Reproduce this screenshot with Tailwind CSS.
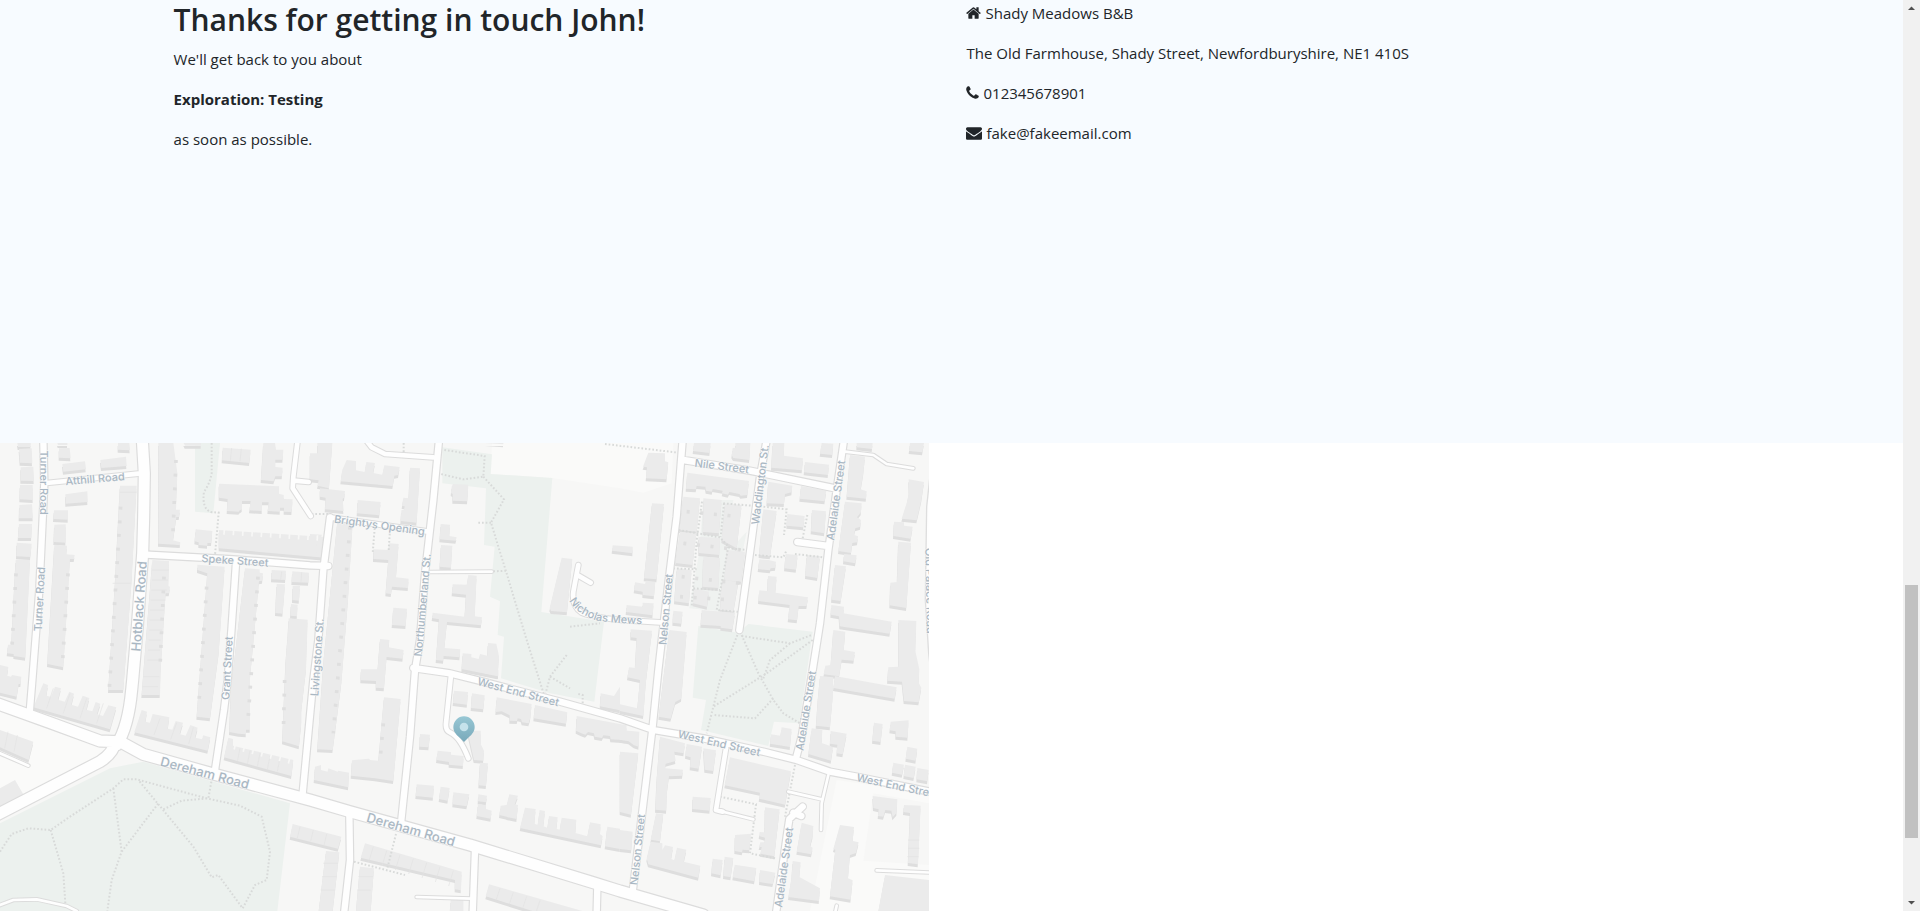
<!DOCTYPE html>
<html lang="en">
<head>
<meta charset="utf-8">
<meta name="viewport" content="width=device-width, initial-scale=1">
<title>Shady Meadows B&amp;B</title>
<script src="https://cdn.jsdelivr.net/npm/@tailwindcss/browser@4"></script>
</head>
<body class="flex h-screen overflow-hidden bg-white font-['Open_Sans','Noto_Sans',sans-serif] text-[#212529]">
<main class="flex min-w-0 flex-1 flex-col">
  <section class="h-[443px] shrink-0 bg-[#f7fbff]">
    <div class="mx-auto grid w-10/12 grid-cols-2 pt-px text-[15px] leading-6">
      <div class="px-[15px]">
        <h2 class="mb-2 text-[30px] leading-[38px] font-semibold">Thanks for getting in touch John!</h2>
        <p class="mb-4">We'll get back to you about</p>
        <p class="mb-4 font-bold">Exploration: Testing</p>
        <p>as soon as possible.</p>
      </div>
      <address class="px-[15px] not-italic">
        <p class="mb-4 flex items-center gap-1"><svg class="h-4 w-[15px]" viewBox="64 0 1664 1792" fill="currentColor" aria-hidden="true"><path d="M1472 992v480q0 26-19 45t-45 19h-384v-384h-256v384h-384q-26 0-45-19t-19-45v-480q0-1 .5-3t.5-3l575-474 575 474q1 2 1 6zm223-69l-62 74q-8 9-21 11h-3q-13 0-21-7l-692-577-692 577q-12 8-24 7-13-2-21-11l-62-74q-8-10-7-23.5t11-21.5l719-599q32-26 76-26t76 26l244 204v-195q0-14 9-23t23-9h192q14 0 23 9t9 23v408l219 182q10 8 11 21.5t-7 23.5z"/></svg>Shady Meadows B&amp;B</p>
        <p class="mb-4">The Old Farmhouse, Shady Street, Newfordburyshire, NE1 410S</p>
        <p class="mb-4 flex items-center gap-1"><svg class="h-4 w-[13px]" viewBox="192 0 1408 1792" fill="currentColor" aria-hidden="true"><path d="M1600 1240q0 27-10 70.5t-21 68.5q-21 50-122 106-94 51-186 51-27 0-53-3.5t-57.5-12.5-47-14.5-55.5-20.5-49-18q-98-35-175-83-127-79-264-216t-216-264q-48-77-83-175-3-9-18-49t-20.5-55.5-14.5-47-12.5-57.5-3.5-53q0-92 51-186 56-101 106-122 25-11 68.5-21t70.5-10q14 0 21 3 18 6 53 76 11 19 30 54t35 63.5 31 53.5q3 4 17.5 25t21.5 35.5 7 28.5q0 20-28.5 50t-62 55-62 53-28.5 46q0 9 5 22.5t8.5 20.5 14 24 11.5 19q76 137 174 235t235 174q2 1 19 11.5t24 14 20.5 8.5 22.5 5q18 0 46-28.5t53-62 55-62 50-28.5q14 0 28.5 7t35.5 21.5 25 17.5q25 15 53.5 31t63.5 35 54 30q70 35 76 53 3 7 3 21z"/></svg>012345678901</p>
        <p class="flex items-center gap-1"><svg class="h-4 w-4" viewBox="0 0 1792 1792" fill="currentColor" aria-hidden="true"><path d="M1792 710v794q0 66-47 113t-113 47h-1472q-66 0-113-47t-47-113v-794q44 49 101 87 362 246 497 345 57 42 92.5 65.5t94.5 48 110 24.5h2q51 0 110-24.5t94.5-48 92.5-65.5q170-123 498-345 57-39 100-87zm0-294q0 79-49 151t-122 123q-376 261-468 325-10 7-42.5 31t-54 38.5-52 32.5-57.5 27-50 9h-2q-23 0-50-9t-57.5-27-52-32.5-54-38.5-42.5-31q-91-64-262-182.5t-205-142.5q-62-42-117-115.5t-55-136.5q0-78 41.5-130t118.5-52h1472q65 0 112.5 47t47.5 113z"/></svg>fake@fakeemail.com</p>
      </address>
    </div>
  </section>
  <section class="min-h-0 flex-1 overflow-hidden" aria-label="Map">
    <svg class="block h-[468px] w-[929px]" viewBox="0 9 2787 1404" role="img" aria-label="Street map around Shady Meadows B&amp;B">
      <defs>
        <g id="buildings">
          <path d="M52 9h40v12h-38zM57 27l38-2 2 45-37-2zM62 82l38-2 2 43-40-1zM60 135h38l1 45-40-2zM58 195l38-2 3 42h-42zM57 252h39l-2 42h-40zM50 308l45 3-4 40-42-2zM47 360h43l-14 293-35-5v-6l-20-2 3-26h10zM172 9h30v6h-28zM177 25l32-1 3 31-35-2zM187 72l68-8 3 24-68 7zM301 60l77-10 2 28-76 6zM354 9h34l2 22-36-2zM196 163l66-9 1 32-66 5zM162 211h42v28l-44-2zM163 254l34-1v55l-36-2zM163 314l38 3-2 26 25 2-2 12h-12l-20 325-48-10zM360 137h50l-15 283-25 330h-45l20-320zM475 9h45l12 90-4 110h12l-3 22h-8l-10 70 22 6-1 8-65-4zM457 360l50 3-2 75 5 2-3 20h-10l-15 230-2 75h-55zM551 9h52v8h-48zM668 23l84 6-4 40-82-8zM790 9h35l3 20h22l-2 30h-22v22l22 2-2 26h-20l-5 15-38-4zM657 131l180 8v22l14 4v12l27 1-3 38-23-1v-12h-12v12l-37-2 3-26h-20v26l-38-2 4-28h-26v24l-9 6v2l-36-2 2-36-26-4zM587 268l50 5-3 36h-12v8l-26-2v-8l-12-3zM657 270l330 22-4 62-326-29zM592 374l82 6-18 260-26 195-40-5 18-240 14-190-30-10zM735 385l44 3v10l10 2-2 22-10 2-12 130-15 160v155h-12v14l-22-2-28-5 5-130zM815 390l43 2-2 28-42-2zM877 394l50 4-2 30-50-2zM830 432l25 1-7 88-22-2zM878 438h22l-3 44-20-2zM873 492l20 2-2 35-20-2zM866 535l57 4-5 150-14 120v40l-7 70-50-15 4-100 6-140 7-90zM0 675l25 6-4 26 12 3 3-5 28 5-2 22h-6l-6 38-50-12z"/>
          <path transform="translate(0 690)" d="M130 40l14 5-5 32 14 3 12-30 18 5-9 34 20 6 14-30 14 6-8 33 20 6 14-33 20 7-9 35 18 5 10-28 14 5-10 32 18 5 16-32 24 6-19 66-230-66zM425 120l16 5-5 30 14 3 8-26 50 10-5 34 14 3 10-26 22 5-10 34 18 5 14-32 22 8-8 30 22 5 2-12 22 6-8 40-220-55zM685 203l14 4v20l181 43-6 48-202-56zM0 180l100 35-14 55-86-38zM0 355l45-25 28 48-73 35z"/>
          <path transform="translate(930 0)" d="M0 40h22V9h45l-10 136-35-8 4-16-26-3zM30 145l75 8-2 20-5 3 3 37-56-5 2-35-17-3zM110 60l28 3v28l26 5 5-30 26 3-6 30 28 5 6-28 46 5-4 24-12 2-5 31-156-14 5-35zM300 83l30 2-10 163-48-5 2-32 8-2 2-10-8-1 4-25 16 2zM143 180l69 6-4 40-67-6zM0 282l36 2-6 15-8 2-4 45-18-2zM82 245l46 5-14 230-20 250-26 200-46-2 18-260zM190 328l45 2 3-20 28 2-8 100 38 4-2 28-48-4-3 22-16-2 8-100-45-3zM250 503l41 3-4 52-41-3zM210 597l28 3-2 22 45 8-3 26-48-5-8 94-24-2v-20l-46-2 1-33h50zM425 140l4-8 46 2-3 50-44-2v-20l-5-3zM392 252l28 2-2 34 22 4-3 10-48-4zM393 315l34 2-4 66-34-3zM475 405l25 2-6 122 22 3-3 24-102-10-8 78 48 4-2 24-48-4-1 14-22-2 9-122-21-4 2-16 96 12 4-66-42-4 2-27 42 1zM458 640l26 2v10l22 5 4-15 22 5 2-38 25 2 8 38-4 60-108-22zM755 353l32 4-16 160-48-4-4-8zM908 316l60 4v20l-62-8zM525 9h55v4z"/>
          <path transform="translate(1860 0)" d="M222 9h50l-3 30-50-6zM346 9h45l-3 51-48-6-5-8 3-22 8-1zM85 38l50 2v24l10 3-5 51-62-3 3-33-12-2zM458 9h35l-2 38 58 8-3 36-92-8zM555 66l72 8-3 31-72-8zM605 9l35 2-3 34-37-4zM710 9h48l-2 18-46-5zM870 9h42l-5 28-40-4zM202 98l185 25-5 42-20 2-4-5-30-6-4 8-18-4 2-8-30-5-2 8-18-3-2-12-26-2-2 10-30-2zM96 190l36 2-22 226-38-3zM45 427l30 5 3-10 28 3-4 44-34-4v-10l-26-4zM20 495l48 5v-12l33 2-3 36-80-10zM445 125l72 12-2 20-20 5-3 30-52-2zM543 138l76 14-5 32-75-8zM576 210l42 4-5 66-40-6zM502 222l52 6-4 34-50-5zM430 208l40 5-20 136-33-4zM418 358l28 2 22 5-2 18-14 2-2 6-36-4zM497 342l36 3-5 44-35-4zM560 345l40 3-8 66-36-6zM444 408l26 2-4 48 98 14-4 26h-24l-5 43-27-3 5-43-94-12 3-32 24 2zM190 170l50 5-10 100-52-5zM250 175l55 5-8 100-48-4zM315 190l50 5-15 130-45-25zM180 275l48 5-10 95-52-6zM235 290l65 5-2 50-62-6zM170 385l45 5-8 100-44-6zM250 350l50 4-5 90-48-4zM320 330l55 5-12 90-50-4zM222 445l45 10-6 45-42-10zM305 420l50 5-15 90-40-6zM245 510l100 8-8 50-35-5v-5l-60-4zM160 512l28 3-4 36-26-3zM690 45l45 5-5 50-8 48 18 6-2 22-58-6zM675 185l50 5-2 27-12 15 12 8-2 20-15 5-4 20 12 4-2 18-15 2-4 30-38-6zM672 342l38 4-4 24-36-6zM645 375l33 4-16 104-28-4zM634 495l38 5-2 20 145 25-6 36-150-22-2-30-25-5zM866 118l46 8-8 55-14 60-45-5 16-50 6-30zM822 245l30 2v10l26 3-6 36-52-8zM835 305l38 3-14 196-50-8 2-68 20-2zM640 570l36 5-5 55 34 6-4 26-36-3-8 50-46-6 5-26 16-2zM835 540l54 3-3 90 12 55-2 40 8 15-8 44-44-4-6-58-44-3 3-40 30-2zM32 568l64 4-18 150-8 106-70-15v-20l52 12 8-85-38-8 5-30 18 2 5-90-18-2zM148 570l52 6-16 200-18 10-14 50-36-6z"/>
          <path transform="translate(930 690)" d="M-52 462l146 38-10 36-144-36zM222 82l50 5-17 190-5 56-55-8-72-8 3-46 50-5 5 4 24 2zM15 290l18-5v15l20 5 2-10 28 10 2-3 32 6-2 44-103-22zM330 192l30 2-4 38-28-2zM383 242l40 4v8l38 4-2 30-42-4v-8l-38-6zM472 182h40v40l10 20-2 30-28-2zM510 278l24 2-6 68-22-2zM432 62l42 4-3 38-42-5zM486 70l38 6-4 42-37-4zM560 82l105 20-4 42-5 16-20-3-3-10-10-2-2 8-22-1v-16l-24-12-18 2zM675 105l97 22-4 34-97-16zM800 138l150 28-2 45-46-3-2-10-20-2-4 8-22-4-2-10-18-4-8 8-12-4-16-8zM320 343l52 4-3 36-52-5zM392 350l27 4-6 38-26-5zM430 367l48 6-8 36-42-6zM505 373l26 4-3 20-24-3zM504 402l24 3v12l17 5-3 24-42-8zM598 373l26 4-12 32-2 36-42-10 4-28 18-2zM598 400l26 5-4 42-30-6zM645 413l32 4-4 44 10 4 6-45 16 3-5 46 12 4 5-35 26 4-4 34 10 3 6-36 44 6-3 40 36 10 8-42 32 6-2 30 8 5-5 28-243-52zM892 470l38 6v61l-45-8zM872 70l40 8 18-28v71l-60-12zM480 0h85v18zM165 520l290 85-2 56-18-3v-28l-283-67zM48 543l40 4-20 176h-42zM150 590l42 5-10 128h-44zM422 690h38v33h-40zM537 643l280 80h-150l-140-44z"/>
          <path transform="translate(1860 690)" d="M0 180l58 5-2 45-14-4-16-12-26-5zM0 245l55 5-22 184-33-8zM0 480l38 5-4 56-34-4zM120 200l75 20-4 30-28-5 4 28-30 8-2 14 54 4-2 18-40 2-6 45-2 58-33-3 4-90zM108 430l22 3-6 46-4 35-28-5zM200 222l46 8-10 66-26-4 2-30-16-5zM250 235l38 6-8 62-26-4zM218 380l54 4-3 38-52-5zM330 262l183 42-18 100-78-18 3-18-106-22zM435 412l44 6-16 141-42-8 4-20h-8l4-14h12l2-14-18-5 2-12 15 1zM345 495l48-4-5 50-20-2-2 8-22-4zM92 515l35 5v20l8-14 24 5-6 36 10 4 8-38 28 6-8 36 50 12-6 36-150-40-5-18zM278 566l30 4-6 46-28-6zM314 560l26 4-8 58-22-4zM344 584l65 10-6 40-65-12zM420 600l46 8-8 34-40-6zM485 172l30 5-5 54-60-10 3-28 28 4zM575 175l32 4-2 40 34 12-6 41-68-20zM632 183l48 8-12 62-18-3 2-26-22-3zM600 18l40 4-2 60-8 90-42-5 6-85zM645 18l185 34-6 34-184-32zM762 158l26 4-6 54-25-4zM812 155l54-4-3 52-36-3v-16l-18-3zM862 230l30 6-5 36-30-6zM820 278l32 6-6 30-30-6zM855 284l32 6-6 34-30-6zM892 294l34 6-4 34-32-6zM758 378l74 10-2 40-12 14-4-20-18-2-6 20-16-2 2-20-16-4zM852 405l50 2-8 176-30-4 6-150-20-3zM545 458l35 10-2 30-8 30 8 5-4 20-44-8zM660 465l42 6-4 42 18 4-8 32-18 6-6 70 14 6-6 58-62-10 16-140-6-2zM518 573l24 4-4 44 62 34-3 38-92-12 10-60zM795 615l135 15v93h-155z"/>
        </g>
        <path id="minor" d="M1290 396L1475 395M2535 35L2620 45 2660 72 2740 85M2148 1110L2260 1138M2365 1055L2465 1078M2485 1005L2465 1090 2463 1170M1250 1371L1415 1376M2630 1291L2800 1298M2510 1397L2505 1420M0 1395L40 1380 110 1378 200 1398 230 1413M0 940L85 977"/>
        <path id="lanes" d="M2178 925L2148 1110 2168 1115M893 0L880 110 878 145 932 228M882 122L926 126M1353 705L1338 850Q1336 872 1350 877 1380 890 1405 955M1735 375L1720 455Q1715 500 1745 518 1780 532 1860 540L1980 547M1732 405L1772 428M990 232L1285 275M140 129L415 101M1090 -10L1115 22 1155 42 1300 52"/>
        <path id="roads" d="M130 0L133 130 118 450 97 720 88 830M440 344L700 358 930 376 985 378M708 368L695 560 683 720 672 810 645 990M990 232L970 390 955 600 940 720 908 1060M1317 0L1300 180 1275 400 1260 600 1245 690 1230 890 1203 1150M1240 684L1350 700 1430 720 1680 785 1860 835 1960 870 2110 895 2290 935 2390 960 2490 995 2570 1010 2790 1055M2048 0L2030 230 2005 430 1975 690 1958 860 1930 1090 1898 1355M2050 60L2250 92 2505 145M2300 0L2280 110 2255 300 2218 570M2532 0L2510 150 2485 330 2460 550 2438 690 2405 890 2388 955M2392 306L2485 318M2408 1100L2368 1137 2360 1190 2328 1420M2380 1118L2404 1128M1048 1120L1050 1260 1033 1413M1425 1230L1418 1420M1792 1340L1790 1420"/>
        <path id="main" d="M427 0L433 100 431 230 428 340 412 560 398 720 395 750Q385 860 350 915M-10 790L150 848 300 903 360 905 430 943 640 1002 930 1080 1050 1115 1410 1215 1780 1328 1860 1353 2110 1425M-10 1125L300 965Q340 940 346 905"/>
        <path id="nicholas" d="M1708 482Q1725 518 1785 540 1830 550 1985 556"/>
        <linearGradient id="pin" x1="0" y1="0" x2="0" y2="1"><stop offset="0" stop-color="#97c7d4"/><stop offset="1" stop-color="#79a9ba"/></linearGradient>
      </defs>
      <path fill="#f7f7f6" d="M0 0h2787v1413H0z"/>
      <!-- open ground -->
      <path fill="#fafaf9" d="M1476 9H2020L2015 130 1930 158 1860 145 1657 114 1472 102zM0 810L330 920 300 965 0 1110zM2510 1020L2787 1060V1413H2430z"/>
      <path fill="#f7f7f6" d="M2620 1060L2787 1090V1275L2590 1262z"/>
      <!-- parks -->
      <path fill="#ecf1ee" d="M585 9h75l-20 211-55-5zM1327 22l149 21-4 59 185 12-33 402 188 29-29 240-133-25-147-45 9-125-19-5 7-101-30-14 14-150-32-5 6-170-131-15zM2095 558l120 20 30-26 193 23-40 275-76-5-17 73-202-48 15-90-40-7zM0 1150L330 985 430 965 870 1090 832 1413H0z"/>
      <path fill="#eff2f0" d="M2110 180h90l-10 150 50-55-12 60-50 180-110-10 30-170z"/>
      <use href="#buildings" fill="#dedede" transform="translate(-1 9)"/>
      <use href="#buildings" fill="#ebebeb"/>
      <!-- rear extensions along the terraces -->
      <g fill="none" stroke="#dfdfdf" stroke-width="11" stroke-dasharray="9 32">
        <path d="M48 400L36 620M204 400L188 660M362 200L328 745M528 60L518 300M492 410L480 680M620 440L596 800M774 410L744 840M854 720L850 880M1050 260L1000 880M1150 850L1140 960"/>
        <path d="M2060 215L2220 230M2050 310L2225 330M2045 410L2220 430M2040 470L2200 480"/>
      </g>
      <g fill="none" stroke="#e3e3e3" stroke-width="2">
        <path d="M360 157h50M338 430h54M456 390h50M456 420h48M454 450h46M452 480h44M450 510h42M449 540h40M448 570h38M446 600h36M444 630h36M442 660h36M430 710h48M428 740h46M695 24l-4 38M724 26l-4 38M24 875l-10 50M52 885l-10 50M845 395l-3 24M905 397l-2 28M1120 1220l-14 46M1160 1232l-14 46M1200 1244l-14 46M1240 1256l-14 46M1280 1268l-14 46M1320 1280l-14 46M1360 1292l-14 46M900 1160l-8 34M940 1170l-8 34M980 1182l-8 34M970 1270h44M966 1310h44M962 1350h44M1075 1310h44M1072 1350h40M1500 1345l-12 36M1540 1357l-12 36M1580 1369l-12 36M1620 1381l-12 36M2724 1200h34M2724 1225h34M2722 1250h34M160 745l-20 60M210 760l-20 60M260 775l-20 60M310 790l-20 60M480 835l-18 50M530 848l-18 50M580 862l-14 50M720 925l-8 40M750 932l-8 40M780 940l-8 40M810 948l-8 40M840 954l-8 40"/>
      </g>
      <!-- gaps between the terrace backs -->
      <path fill="none" stroke="#f7f7f6" stroke-width="16" stroke-dasharray="5 23" d="M670 276L985 296M702 920L880 966"/>
      <!-- footpaths -->
      <g fill="none" stroke="#d8dad9" stroke-width="6" stroke-dasharray="5 6">
        <path d="M635 9V100Q630 130 612 155 605 205 632 216L656 218 645 345M1333 30L1454 48 1450 110 1390 118 1322 102M1450 110L1512 178 1473 248 1495 320 1520 400 1580 600 1637 780M1435 248H1473M1480 394L1520 392M1710 560L1800 550M1700 645L1650 710 1637 760M1650 710L1710 745M1735 762L1748 765V800M1815 12L2035 38M1211 9V40M935 222H985M1124 265L1118 340M1170 270L1166 330M2036 270L2160 292 2190 325 2240 330M2170 190L2290 200 2360 208 2352 285M2106 185L2090 300 2075 500M2172 190L2162 290M2185 320L2150 510 2220 516M2020 385L2090 388M2080 445L2160 450M2422 225L2408 295M2265 345L2350 352 2358 335M2385 342L2470 352"/>
        <path d="M2212 585L2160 720 2120 880M2225 585L2275 700 2320 780 2350 820 2400 850M2225 588L2370 610 2435 585M2438 600L2300 700 2140 800M2370 610L2310 660 2290 715M2320 775L2265 835 2140 825M2385 975L2355 1130M2160 1070L2268 1093 2250 1240 2330 1256M0 1235L35 1182 85 1165 152 1170 210 1130 340 1045 370 1018 410 1018 620 1075 720 1097 785 1130 810 1235 800 1320 765 1335 728 1405 655 1305 635 1312 580 1220 415 1020M152 1170L190 1300 196 1390M340 1045L365 1235 335 1320 322 1413M365 1235L475 1090M490 1108L545 1082 625 1075 636 1015M1188 1182L1162 1285M1062 1265L1215 1305"/>
      </g>
      <path fill="#fefefe" stroke="#dedede" stroke-width="4" d="M2795 60L2780 200 2776 480 2786 640 2795 720z"/>
      <g fill="none" stroke-linecap="round" stroke-linejoin="round">
        <g stroke="#dcdcdc">
          <use href="#minor" stroke-width="14"/><use href="#lanes" stroke-width="20"/><use href="#roads" stroke-width="26"/><use href="#main" stroke-width="40"/>
        </g>
        <g stroke="#fefefe">
          <use href="#minor" stroke-width="8"/><use href="#lanes" stroke-width="14"/><use href="#roads" stroke-width="19"/><use href="#main" stroke-width="33"/>
        </g>
      </g>
      <g class="font-['Inter','Open_Sans',sans-serif] text-[33px] font-medium" fill="#a9b7c3" stroke="#f9f9f9" stroke-width="3" stroke-linejoin="round" paint-order="stroke" text-anchor="middle">
        <text transform="translate(121 128) rotate(90)">Turner Road</text>
        <text transform="translate(130 478) rotate(-87)">Turner Road</text>
        <text transform="translate(286 128) rotate(-5)">Atthill Road</text>
        <text transform="translate(704 373) rotate(4)">Speke Street</text>
        <text transform="translate(693 685) rotate(-87)">Grant Street</text>
        <text transform="translate(963 653) rotate(-86)">Livingstone St.</text>
        <text transform="translate(1137 267) rotate(8)">Brightys Opening</text>
        <text transform="translate(1279 496) rotate(-85)">Northumberland St.</text>
        <text text-anchor="start"><textPath href="#nicholas">Nicholas Mews</textPath></text>
        <text transform="translate(2009 509) rotate(-85)">Nelson Street</text>
        <text transform="translate(2164 90) rotate(7)">Nile Street</text>
        <text transform="translate(2277 255) rotate(-83)" text-anchor="start">Waddington St.</text>
        <text transform="translate(2519 183) rotate(-82)">Adelaide Street</text>
        <text transform="translate(2429 814) rotate(-81)">Adelaide Street</text>
        <text transform="translate(2363 1284) rotate(-82)">Adelaide Street</text>
        <text transform="translate(1924 1230) rotate(-84)">Nelson Street</text>
        <text transform="translate(1552 767) rotate(15)">West End Street</text>
        <text transform="translate(2155 921) rotate(13)">West End Street</text>
        <text transform="translate(2568 1023) rotate(12)" text-anchor="start">West End Street</text>
        <text transform="translate(2776 324) rotate(89)" text-anchor="start">Old Palace Road</text>
        <g class="text-[39px]">
          <text transform="translate(431 500) rotate(-86)">Hotblack Road</text>
          <text transform="translate(611 1012) rotate(15)">Dereham Road</text>
          <text transform="translate(1229 1182) rotate(16)">Dereham Road</text>
        </g>
      </g>
      <path fill="url(#pin)" d="M1392 829a32 32 0 0 1 32 32c0 16-12 26-20 33l-12 12-12-12c-8-7-20-17-20-33a32 32 0 0 1 32-32z"/>
      <circle cx="1392" cy="861" r="13" fill="#c5e2eb"/>
    </svg>
  </section>
</main>
<aside class="flex w-[17px] shrink-0 flex-col items-center bg-[#f1f1f1]" aria-hidden="true">
  <svg class="h-[17px] w-[17px] shrink-0" viewBox="0 0 17 17"><path fill="#505050" d="M5 10h7L8.500 6.500z"/></svg>
  <div class="flex w-full flex-1 flex-col items-center">
    <div class="grow-[568]"></div>
    <div class="w-[13px] grow-[253] bg-[#c1c1c1]"></div>
    <div class="grow-[56]"></div>
  </div>
  <svg class="h-[17px] w-[17px] shrink-0" viewBox="0 0 17 17"><path fill="#505050" d="M5 7h7L8.500 10.500z"/></svg>
</aside>
</body>
</html>
